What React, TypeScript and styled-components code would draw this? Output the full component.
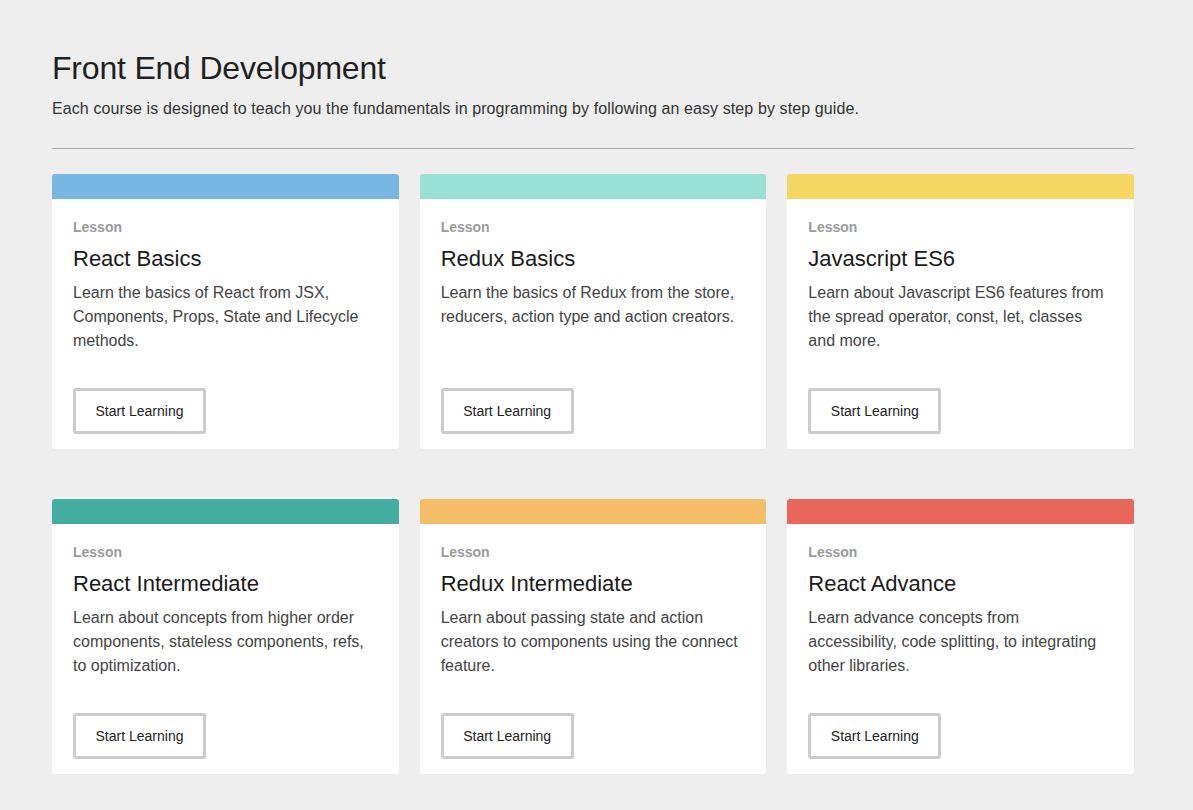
import React from "react";
import styled, { createGlobalStyle } from "styled-components";

const Global = createGlobalStyle`
  html, body { margin: 0; padding: 0; background: #eeeeee; }
  body { font-family: "Liberation Sans", Arial, Helvetica, sans-serif; color: #222; }
  * { box-sizing: border-box; }
`;

const Page = styled.div`
  padding: 50px 59px 36px 52px;
  display: flex;
  flex-direction: column;
`;

const Title = styled.h1`
  margin: 0;
  font-size: 32px;
  font-weight: 400;
  line-height: 36px;
  color: #1f1f1f;
  letter-spacing: -0.2px;
`;

const Subtitle = styled.p`
  margin: 12px 0 0;
  font-size: 16px;
  line-height: 22px;
  color: #333;
  letter-spacing: 0.1px;
`;

const Rule = styled.hr`
  margin: 28px 0 25px;
  border: 0;
  border-top: 1px solid #aaaaaa;
  height: 0;
`;

const Grid = styled.div`
  display: grid;
  grid-template-columns: repeat(3, 1fr);
  column-gap: 21px;
  row-gap: 50px;
`;

const Card = styled.div`
  display: flex;
  flex-direction: column;
  background: #fff;
  border-radius: 3px;
  overflow: hidden;
  height: 275px;
`;

const Stripe = styled.div<{ $color: string }>`
  height: 25px;
  background: ${(p) => p.$color};
  flex-shrink: 0;
`;

const Body = styled.div`
  flex: 1;
  display: flex;
  flex-direction: column;
  padding: 20px 26px 15px 21px;
`;

const Label = styled.div`
  font-size: 14px;
  font-weight: 700;
  color: #9a9a9a;
  line-height: 16px;
`;

const CardTitle = styled.h2`
  margin: 11px 0 0;
  font-size: 22px;
  font-weight: 400;
  line-height: 26px;
  color: #1a1a1a;
`;

const Desc = styled.p`
  margin: 9px 0 0;
  font-size: 16px;
  line-height: 24px;
  color: #444;
`;

const Button = styled.button`
  margin-top: auto;
  align-self: flex-start;
  width: 133px;
  height: 46px;
  background: #fff;
  border: 3px solid #cccccc;
  border-radius: 3px;
  font-family: inherit;
  font-size: 14px;
  color: #222;
  cursor: pointer;
`;

const courses = [
  { color: "#79b7e3", title: "React Basics", desc: "Learn the basics of React from JSX, Components, Props, State and Lifecycle methods." },
  { color: "#98e1d4", title: "Redux Basics", desc: "Learn the basics of Redux from the store, reducers, action type and action creators." },
  { color: "#f5d662", title: "Javascript ES6", desc: "Learn about Javascript ES6 features from the spread operator, const, let, classes and more." },
  { color: "#43ad9f", title: "React Intermediate", desc: "Learn about concepts from higher order components, stateless components, refs, to optimization." },
  { color: "#f5bd67", title: "Redux Intermediate", desc: "Learn about passing state and action creators to components using the connect feature." },
  { color: "#e8665a", title: "React Advance", desc: "Learn advance concepts from accessibility, code splitting, to integrating other libraries." },
];

export default function App() {
  return (
    <Page>
      <Global />
      <Title>Front End Development</Title>
      <Subtitle>
        Each course is designed to teach you the fundamentals in programming by following an easy step by step guide.
      </Subtitle>
      <Rule />
      <Grid>
        {courses.map((c) => (
          <Card key={c.title}>
            <Stripe $color={c.color} />
            <Body>
              <Label>Lesson</Label>
              <CardTitle>{c.title}</CardTitle>
              <Desc>{c.desc}</Desc>
              <Button>Start Learning</Button>
            </Body>
          </Card>
        ))}
      </Grid>
    </Page>
  );
}
